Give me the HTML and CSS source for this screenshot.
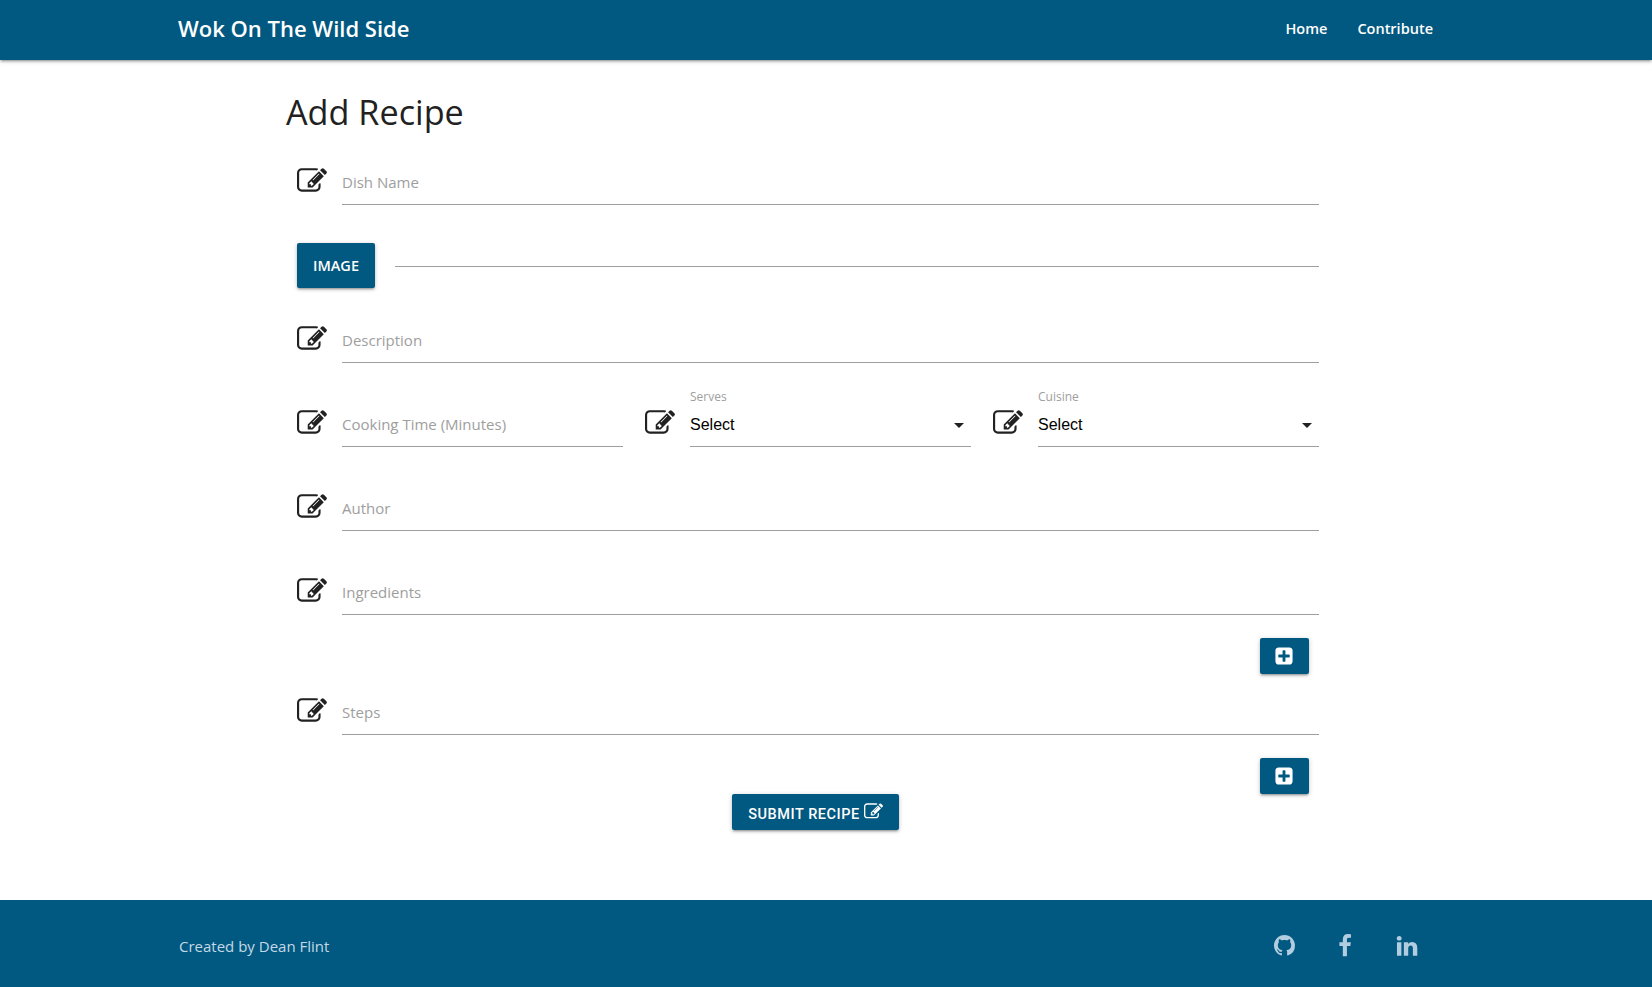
FILE: index.html
```html
<!DOCTYPE html>
<html lang="en">
<head>
<meta charset="utf-8">
<title>Wok On The Wild Side</title>
<link rel="stylesheet" href="styles.css">
</head>
<body>
<svg class="defs" width="0" height="0" aria-hidden="true">
  <symbol id="edit" viewBox="0 0 1792 1792"><path d="M888 1184l116-116-152-152-116 116v56h96v96h56zm440-720q-16-16-33 1l-350 350q-17 17-1 33t33-1l350-350q17-17 1-33zm80 594v190q0 119-84.500 203.500t-203.500 84.500h-832q-119 0-203.500-84.500t-84.500-203.500v-832q0-119 84.500-203.500t203.500-84.500h832q63 0 117 25 15 7 18 23 3 17-9 29l-49 49q-14 14-32 8-23-6-45-6h-832q-66 0-113 47t-47 113v832q0 66 47 113t113 47h832q66 0 113-47t47-113v-126q0-13 9-22l64-64q15-15 35-7t20 29zm-96-738l288 288-672 672h-288v-288zm444 132l-92 92-288-288 92-92q28-28 68-28t68 28l152 152q28 28 28 68t-28 68z"/></symbol>
  <symbol id="plus" viewBox="0 0 1792 1792"><path d="M1408 960v-128q0-26-19-45t-45-19h-320v-320q0-26-19-45t-45-19h-128q-26 0-45 19t-19 45v320h-320q-26 0-45 19t-19 45v128q0 26 19 45t45 19h320v320q0 26 19 45t45 19h128q26 0 45-19t19-45v-320h320q26 0 45-19t19-45zm256-544v960q0 119-84.500 203.500t-203.500 84.500h-960q-119 0-203.500-84.500t-84.500-203.500v-960q0-119 84.500-203.500t203.500-84.500h960q119 0 203.500 84.500t84.500 203.500z"/></symbol>
</svg>

<header class="navbar">
  <a class="brand" href="#">Wok On The Wild Side</a>
  <nav class="nav-links">
    <a href="#">Home</a>
    <a href="#">Contribute</a>
  </nav>
</header>

<main class="page">
  <h1 class="title">Add Recipe</h1>
  <form class="form">
    <div class="field">
      <svg class="prefix"><use href="#edit"/></svg>
      <input class="input" placeholder="Dish Name">
    </div>

    <div class="file-row">
      <span class="btn btn-image">Image</span>
      <span class="file-line"></span>
    </div>

    <div class="field">
      <svg class="prefix"><use href="#edit"/></svg>
      <input class="input" placeholder="Description">
    </div>

    <div class="three">
      <div class="field">
        <svg class="prefix"><use href="#edit"/></svg>
        <input class="input" placeholder="Cooking Time (Minutes)">
      </div>
      <div class="field">
        <svg class="prefix"><use href="#edit"/></svg>
        <div class="select">
          <span class="select-label">Serves</span>
          <span class="select-value">Select</span>
          <span class="caret"></span>
        </div>
      </div>
      <div class="field">
        <svg class="prefix"><use href="#edit"/></svg>
        <div class="select">
          <span class="select-label">Cuisine</span>
          <span class="select-value">Select</span>
          <span class="caret"></span>
        </div>
      </div>
    </div>

    <div class="field">
      <svg class="prefix"><use href="#edit"/></svg>
      <input class="input" placeholder="Author">
    </div>

    <div class="field field-tight">
      <svg class="prefix"><use href="#edit"/></svg>
      <input class="input" placeholder="Ingredients">
    </div>
    <div class="add-row">
      <span class="btn btn-add"><svg class="plus-icon"><use href="#plus"/></svg></span>
    </div>

    <div class="field field-tight">
      <svg class="prefix"><use href="#edit"/></svg>
      <input class="input" placeholder="Steps">
    </div>
    <div class="add-row add-row-last">
      <span class="btn btn-add"><svg class="plus-icon"><use href="#plus"/></svg></span>
    </div>

    <div class="submit-row">
      <span class="btn btn-submit">Submit Recipe <svg class="submit-icon"><use href="#edit"/></svg></span>
    </div>
  </form>
</main>

<footer class="footer">
  <span class="credit">Created by Dean Flint</span>
  <div class="social">
    <svg class="social-icon" viewBox="0 0 16 16"><path d="M8 0C3.58 0 0 3.58 0 8c0 3.54 2.29 6.53 5.47 7.59.4.07.55-.17.55-.38 0-.19-.01-.82-.01-1.49-2.01.37-2.53-.49-2.69-.94-.09-.23-.48-.94-.82-1.13-.28-.15-.68-.52-.01-.53.63-.01 1.08.58 1.23.82.72 1.21 1.87.87 2.33.66.07-.52.28-.87.51-1.07-1.78-.2-3.64-.89-3.64-3.95 0-.87.31-1.59.82-2.15-.08-.2-.36-1.02.08-2.12 0 0 .67-.21 2.2.82.64-.18 1.32-.27 2-.27.68 0 1.36.09 2 .27 1.53-1.04 2.2-.82 2.2-.82.44 1.1.16 1.92.08 2.12.51.56.82 1.27.82 2.15 0 3.07-1.87 3.75-3.65 3.95.29.25.54.73.54 1.48 0 1.07-.01 1.93-.01 2.2 0 .21.15.46.55.38A8.013 8.013 0 0016 8c0-4.42-3.58-8-8-8z"/></svg>
    <svg class="social-icon" viewBox="0 0 1792 1792"><path d="M1343 12v264h-157q-86 0-116 36t-30 108v189h293l-39 296h-254v759h-306v-759h-255v-296h255v-218q0-186 104-288.500t277-102.500q147 0 228 12z"/></svg>
    <svg class="social-icon" viewBox="0 0 1792 1792"><path d="M477 625v991h-330v-991h330zm21-306q1 73-50.500 122t-135.500 49h-2q-82 0-132-49t-50-122q0-74 51.500-122.500t134.500-48.500 133 48.500 51 122.500zm1166 729v568h-329v-530q0-105-40.500-164.500t-126.500-59.500q-63 0-105.500 34.500t-63.500 85.500q-11 30-11 81v553h-329q2-399 2-647t-1-296l-1-48h329v144h-2q20-32 41-56t56.500-52 87-43.500 114.500-15.500q171 0 275 113.500t104 332.500z"/></svg>
  </div>
</footer>
</body>
</html>
```

FILE: styles.css
```css
* { box-sizing: border-box; }

html, body { margin: 0; padding: 0; }

body {
  display: flex;
  flex-direction: column;
  min-height: 987px;
  background: #fff;
  color: #212121;
  font-family: "Open Sans", sans-serif;
  font-size: 15px;
}

.defs { display: block; height: 0; }

.navbar {
  height: 60px;
  flex: none;
  display: flex;
  align-items: center;
  justify-content: space-between;
  padding: 0 219px 4px 178px;
  background: #015880;
  box-shadow: 0 2px 2px 0 rgba(0,0,0,.14), 0 3px 1px -2px rgba(0,0,0,.12), 0 1px 5px 0 rgba(0,0,0,.2);
}

.navbar a { color: #fff; text-decoration: none; }

.brand { font-size: 22px; font-weight: 600; }

.nav-links { display: flex; gap: 30px; font-size: 14.5px; font-weight: 600; }

.page {
  flex: 1;
  width: 1044px;
  margin-left: 286px;
}

.title {
  margin: 0;
  padding-top: 29px;
  height: 99px;
  font-size: 34.2px;
  font-weight: 400;
  line-height: 46px;
  color: #212121;
}

.form { display: flex; flex-direction: column; padding: 0 11px; }

.field {
  position: relative;
  display: flex;
  padding-left: 45px;
  margin-bottom: 38px;
}

.field-tight { margin-bottom: 0; }

.prefix {
  position: absolute;
  left: 0;
  top: 7px;
  width: 30px;
  height: 30px;
  fill: #212121;
}

.input {
  flex: 1;
  min-width: 0;
  height: 46px;
  padding: 1px 0 0;
  border: 0;
  border-bottom: 1px solid #9e9e9e;
  border-radius: 0;
  outline: 0;
  background: transparent;
  font-family: "Open Sans", sans-serif;
  font-size: 15px;
  color: #212121;
}

.input::placeholder { color: #9e9e9e; opacity: 1; }

.btn {
  display: inline-flex;
  align-items: center;
  justify-content: center;
  background: #015880;
  color: #fff;
  border-radius: 2px;
  box-shadow: 0 2px 2px 0 rgba(0,0,0,.14), 0 3px 1px -2px rgba(0,0,0,.12), 0 1px 5px 0 rgba(0,0,0,.2);
  text-transform: uppercase;
}

.file-row {
  display: flex;
  align-items: center;
  gap: 20px;
  margin-bottom: 29px;
}

.btn-image {
  flex: none;
  width: 78px;
  height: 45px;
  font-size: 14.5px;
  font-weight: 600;
}

.file-line {
  flex: 1;
  height: 1px;
  margin-top: 2px;
  background: #9e9e9e;
}

.three {
  display: grid;
  grid-template-columns: repeat(3, 326px);
  column-gap: 22px;
}

.select {
  flex: 1;
  position: relative;
  height: 46px;
  display: flex;
  align-items: center;
  padding-top: 2px;
  border-bottom: 1px solid #9e9e9e;
}

.select-label {
  position: absolute;
  left: 0;
  top: -12px;
  font-size: 12px;
  color: #9e9e9e;
  line-height: 16px;
}

.select-value {
  font-family: "Liberation Sans", Arial, sans-serif;
  font-size: 16px;
  color: #000;
}

.caret {
  position: absolute;
  right: 7px;
  top: 22px;
  border-left: 5px solid transparent;
  border-right: 5px solid transparent;
  border-top: 5px solid #212121;
}

.add-row {
  display: flex;
  justify-content: flex-end;
  padding-right: 10px;
  margin-top: 23px;
  margin-bottom: 15px;
}

.add-row-last { margin-bottom: 0; }

.btn-add { width: 49px; height: 36px; padding-right: 2px; }

.plus-icon { width: 20px; height: 20px; fill: #fff; }

.submit-row { padding-left: 435px; }

.btn-submit {
  width: 167px;
  height: 36px;
  gap: 4px;
  padding-top: 4px;
  font-family: Roboto, sans-serif;
  font-size: 14.5px;
  font-weight: 500;
  letter-spacing: .55px;
}

.submit-icon { width: 19px; height: 19px; fill: #fff; margin-top: -6px; }

.footer {
  flex: none;
  height: 87px;
  display: flex;
  align-items: center;
  justify-content: space-between;
  padding: 4px 233px 0 179px;
  background: #015880;
  color: #c3d8e6;
  font-size: 15px;
}

.social { display: flex; gap: 38px; align-items: center; }

.social-icon { width: 24px; height: 24px; fill: #b3cde0; }

.social-icon:first-child { width: 21px; height: 21px; }
```
